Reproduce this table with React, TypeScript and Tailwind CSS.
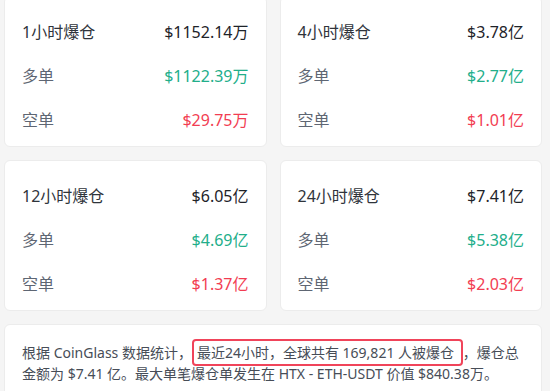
import React from 'react'

type Stat = {
  title: string
  total: string
  long: string
  short: string
}

const stats: Stat[] = [
  { title: '1小时爆仓', total: '$1152.14万', long: '$1122.39万', short: '$29.75万' },
  { title: '4小时爆仓', total: '$3.78亿', long: '$2.77亿', short: '$1.01亿' },
  { title: '12小时爆仓', total: '$6.05亿', long: '$4.69亿', short: '$1.37亿' },
  { title: '24小时爆仓', total: '$7.41亿', long: '$5.38亿', short: '$2.03亿' },
]

const StatCard = ({ stat }: { stat: Stat }) => {
  return (
    <div className="bg-white border border-[#ececec] rounded-[6px] pt-[23px] pb-[14px] px-[17px] flex flex-col gap-[20px]">
      <div className="flex items-center justify-between h-6">
        <span className="text-[#2f343b]">{stat.title}</span>
        <span className="text-[#1e2329]">{stat.total}</span>
      </div>
      <div className="flex items-center justify-between h-6">
        <span className="text-[#5e6673]">多单</span>
        <span className="text-[#22ae8a]">{stat.long}</span>
      </div>
      <div className="flex items-center justify-between h-6">
        <span className="text-[#5e6673]">空单</span>
        <span className="text-[#f23d52]">{stat.short}</span>
      </div>
    </div>
  )
}

const App = () => {
  return (
    <div
      className="min-h-screen bg-[#f5f5f5] pl-1 pr-2 overflow-hidden text-[16px] leading-6"
      style={{ fontFamily: '"Noto Sans", "Noto Sans CJK SC", sans-serif' }}
    >
      <div className="grid grid-cols-2 gap-[13px] -mt-1">
        {stats.map((s) => (
          <StatCard key={s.title} stat={s} />
        ))}
      </div>
      {/* summary */}
      <div className="mt-[13px] bg-white border border-[#ececec] rounded-[6px] pt-[17px] pb-4 px-[17px] text-[14px] leading-[21px] text-[#474d57]">
        根据 CoinGlass 数据统计，
        <span className="border-2 border-[#f0445a] rounded-[4px] px-[3px] py-[2px]">最近24小时，全球共有 169,821 人被爆仓 </span>
        ，爆仓总金额为 $7.41 亿。最大单笔爆仓单发生在 HTX - ETH-USDT 价值 $840.38万。
      </div>
    </div>
  )
}

export default App
